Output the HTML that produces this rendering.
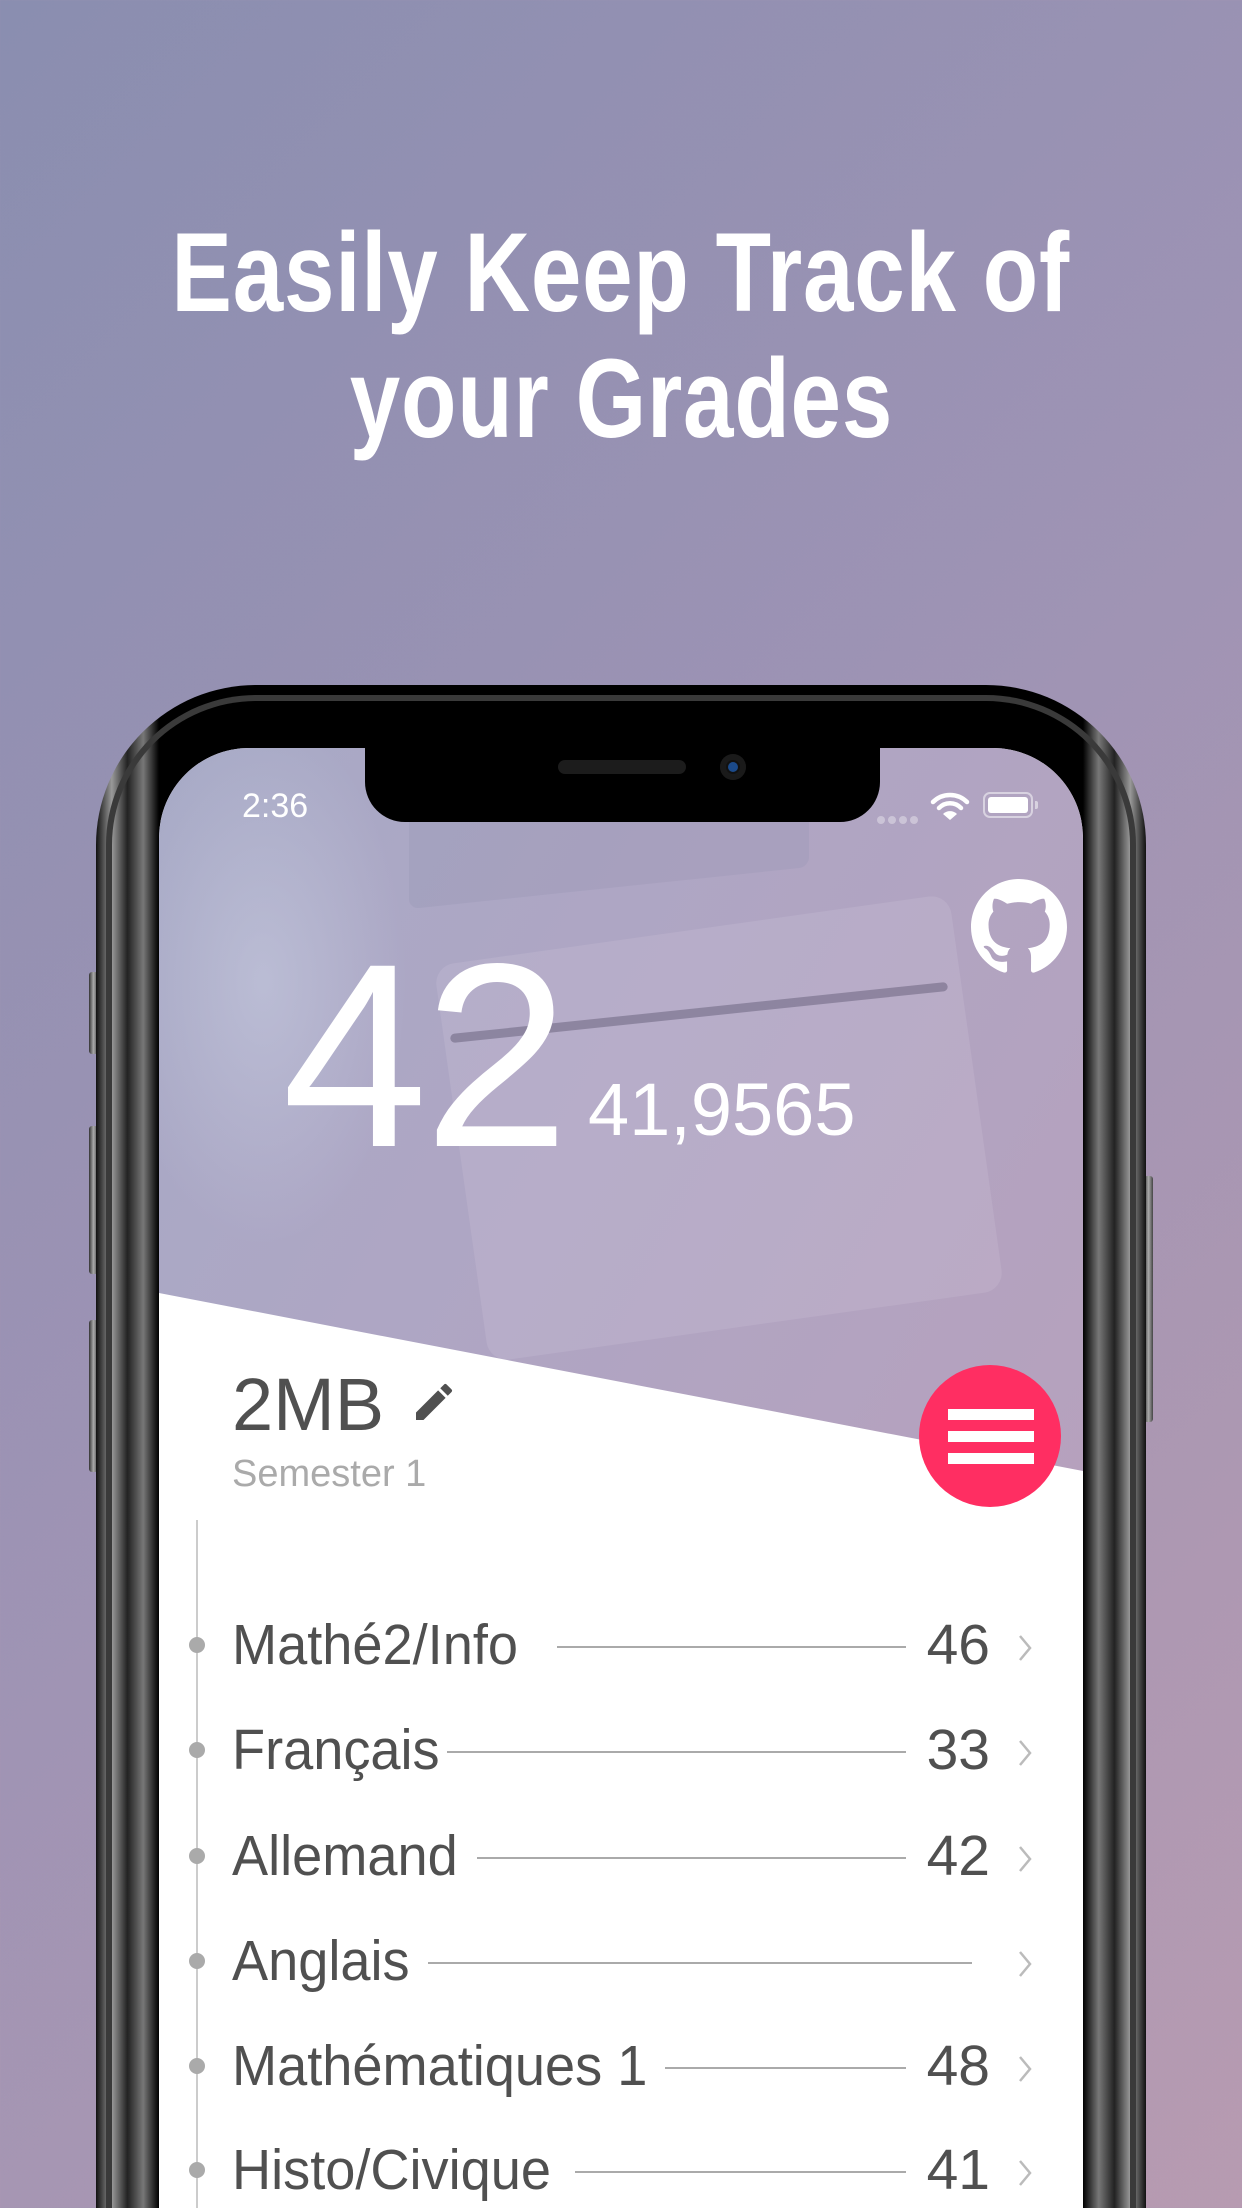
<!DOCTYPE html>
<html><head><meta charset="utf-8">
<style>
*{margin:0;padding:0;box-sizing:border-box}
html,body{width:1242px;height:2208px;overflow:hidden}
body{position:relative;background:linear-gradient(135deg,#8a8eb0 0%,#9d93b4 45%,#b79bb1 100%);font-family:"Liberation Sans",sans-serif}
.title{position:absolute;left:0;width:1242px;text-align:center;color:#fff;font-weight:bold;font-size:112px;line-height:126px;top:210px;letter-spacing:1px}
.title span{display:inline-block;transform:scaleX(0.81)}
.btn{position:absolute;background:linear-gradient(90deg,#333,#aaa,#444);border-radius:3px}
.phone{position:absolute;left:96px;top:685px;width:1050px;height:1523px;border-radius:160px 160px 0 0;background:linear-gradient(90deg,#111 0%,#999 1.5%,#222 3%,#777 4.5%,#000 6%,#000 94%,#777 95.5%,#222 97%,#999 98.5%,#111 100%);}
.phone:before{content:"";position:absolute;left:10px;top:10px;right:10px;bottom:0;border-radius:150px 150px 0 0;border:6px solid #3a3a3a;border-bottom:none}
.screen{position:absolute;left:159px;top:748px;width:924px;height:1460px;border-radius:90px 90px 0 0;overflow:hidden;background:#fff}
.hdr{position:absolute;left:0;top:0;width:924px;height:760px;background:linear-gradient(120deg,#a7aac6 0%,#aea6c4 40%,#b6a1bd 100%)}
.white{position:absolute;left:0;top:0;width:924px;height:900px;background:#fff;clip-path:polygon(0 545px,924px 723px,924px 900px,0 900px)}
.notch{position:absolute;left:365px;top:740px;width:515px;height:82px;background:#000;border-radius:0 0 40px 40px}
.num{position:absolute;color:#fff}
.row{position:absolute;left:232px;width:800px;height:60px;color:#505050;font-size:57px}
.row .t{position:absolute;left:0;top:0;display:inline-block;transform:scaleX(0.95);transform-origin:left}
.row .l{position:absolute;height:2px;background:#aaa;top:34px}
.row .n{position:absolute;right:42px;top:0}
.row .c{position:absolute;right:0;top:22px;width:14px;height:28px}
.dot{position:absolute;left:189px;width:16px;height:16px;border-radius:50%;background:#aaa}
</style></head><body>
<div class="title"><span>Easily Keep Track of</span><br><span>your Grades</span></div>

<div class="btn" style="left:89px;top:972px;width:9px;height:82px"></div>
<div class="btn" style="left:89px;top:1126px;width:9px;height:148px"></div>
<div class="btn" style="left:89px;top:1320px;width:9px;height:152px"></div>
<div class="btn" style="left:1144px;top:1176px;width:9px;height:246px"></div>
<div class="phone"></div>

<div class="screen">
 <div class="hdr">
  <div style="position:absolute;left:0;top:0;width:260px;height:520px;background:radial-gradient(ellipse at 40% 45%,rgba(200,205,225,.55),rgba(200,205,225,0) 65%)"></div>
  <div style="position:absolute;left:250px;top:-20px;width:400px;height:160px;background:rgba(140,140,170,.2);transform:skewY(-6deg);border-radius:10px"></div>
  <div style="position:absolute;left:300px;top:180px;width:520px;height:400px;background:rgba(215,205,225,.2);transform:rotate(-8deg);border-radius:20px"></div>
  <div style="position:absolute;left:290px;top:260px;width:500px;height:9px;background:rgba(90,85,110,.45);transform:rotate(-6deg);border-radius:5px"></div>
 </div>
 <div class="white"></div>
</div>
<div class="notch"><div style="position:absolute;left:193px;top:20px;width:128px;height:14px;border-radius:7px;background:#1c1c1c"></div><div style="position:absolute;left:355px;top:14px;width:26px;height:26px;border-radius:50%;background:#111;box-shadow:inset 0 0 0 6px #1a1a1a"><div style="position:absolute;left:8px;top:8px;width:10px;height:10px;border-radius:50%;background:#1b4a8a"></div></div></div>

<div class="num" style="left:242px;top:786px;font-size:34px;line-height:40px">2:36</div>
<div style="position:absolute;left:877px;top:811px">
 <span style="display:inline-block;width:8px;height:8px;border-radius:50%;background:rgba(255,255,255,.35);margin-right:3px"></span><span style="display:inline-block;width:8px;height:8px;border-radius:50%;background:rgba(255,255,255,.35);margin-right:3px"></span><span style="display:inline-block;width:8px;height:8px;border-radius:50%;background:rgba(255,255,255,.35);margin-right:3px"></span><span style="display:inline-block;width:8px;height:8px;border-radius:50%;background:rgba(255,255,255,.35)"></span>
</div>
<svg style="position:absolute;left:930px;top:792px" width="40" height="28" viewBox="0 0 40 28"><path d="M3 10 A24 24 0 0 1 37 10" stroke="#fff" stroke-width="4.5" fill="none" stroke-linecap="round"/><path d="M9 16 A15 15 0 0 1 31 16" stroke="#fff" stroke-width="4.5" fill="none" stroke-linecap="round"/><path d="M13 22 L20 28 L27 22 A10 10 0 0 0 13 22Z" fill="#fff"/></svg>
<div style="position:absolute;left:983px;top:792px;width:50px;height:26px;border:2px solid rgba(255,255,255,.5);border-radius:7px"><div style="position:absolute;left:3px;top:3px;right:3px;bottom:3px;background:#fff;border-radius:3px"></div></div>
<div style="position:absolute;left:1035px;top:801px;width:3px;height:8px;background:rgba(255,255,255,.5);border-radius:0 2px 2px 0"></div>

<svg style="position:absolute;left:971px;top:879px" width="96" height="96" viewBox="0 0 16 16"><path fill="#fff" d="M8 0C3.58 0 0 3.58 0 8c0 3.54 2.290 6.53 5.47 7.59.4.07.55-.17.55-.38 0-.19-.01-.82-.01-1.49-2.01.37-2.53-.49-2.69-.94-.09-.23-.48-.94-.82-1.13-.28-.15-.68-.52-.01-.53.63-.01 1.08.58 1.23.82.72 1.21 1.87.87 2.33.66.07-.52.28-.87.51-1.07-1.78-.2-3.64-.89-3.64-3.95 0-.87.31-1.59.82-2.150-.08-.2-.36-1.02.08-2.12 0 0 .67-.21 2.2.82.64-.18 1.32-.27 2-.27.68 0 1.36.09 2 .27 1.53-1.04 2.2-.82 2.2-.82.44 1.1.16 1.92.08 2.12.51.56.82 1.27.82 2.15 0 3.07-1.87 3.75-3.65 3.95.29.25.54.73.54 1.48 0 1.07-.01 1.93-.01 2.2 0 .21.15.46.55.38A8.013 8.013 0 0016 8c0-4.42-3.58-8-8-8z"/></svg>

<div class="num" style="left:282px;top:925px;font-size:262px;line-height:262px;letter-spacing:-4px">42</div>
<div class="num" style="left:588px;top:1070px;font-size:74px;line-height:80px">41,9565</div>

<div style="position:absolute;left:232px;top:1365px;font-size:74px;line-height:80px;color:#505050">2MB</div>
<svg style="position:absolute;left:410px;top:1378px" width="48" height="48" viewBox="0 0 24 24"><path fill="#505050" d="M3 17.25V21h3.75L17.81 9.94l-3.75-3.75L3 17.25zM20.71 7.04a1 1 0 000-1.41l-2.34-2.34a1 1 0 00-1.41 0l-1.83 1.83 3.75 3.75 1.830-1.83z"/></svg>
<div style="position:absolute;left:232px;top:1452px;font-size:38px;line-height:44px;color:#aaa">Semester 1</div>

<div style="position:absolute;left:919px;top:1365px;width:142px;height:142px;border-radius:50%;background:#ff2e62">
 <div style="position:absolute;left:29px;top:44px;width:86px;height:11px;background:#fff"></div>
 <div style="position:absolute;left:29px;top:66px;width:86px;height:11px;background:#fff"></div>
 <div style="position:absolute;left:29px;top:88px;width:86px;height:11px;background:#fff"></div>
</div>

<div style="position:absolute;left:196px;top:1520px;width:2px;height:700px;background:#ccc"></div>

<div class="dot" style="top:1637px"></div>
<div class="row" style="top:1612px"><span class="t">Mathé2/Info</span><div class="l" style="left:325px;right:126px"></div><span class="n">46</span><svg class="c" viewBox="0 0 14 28"><path d="M2 2 L12 14 L2 26" stroke="#bbb" stroke-width="2.5" fill="none"/></svg></div>
<div class="dot" style="top:1742px"></div>
<div class="row" style="top:1717px"><span class="t">Français</span><div class="l" style="left:215px;right:126px"></div><span class="n">33</span><svg class="c" viewBox="0 0 14 28"><path d="M2 2 L12 14 L2 26" stroke="#bbb" stroke-width="2.5" fill="none"/></svg></div>
<div class="dot" style="top:1848px"></div>
<div class="row" style="top:1823px"><span class="t">Allemand</span><div class="l" style="left:245px;right:126px"></div><span class="n">42</span><svg class="c" viewBox="0 0 14 28"><path d="M2 2 L12 14 L2 26" stroke="#bbb" stroke-width="2.5" fill="none"/></svg></div>
<div class="dot" style="top:1953px"></div>
<div class="row" style="top:1928px"><span class="t">Anglais</span><div class="l" style="left:196px;right:60px"></div><svg class="c" viewBox="0 0 14 28"><path d="M2 2 L12 14 L2 26" stroke="#bbb" stroke-width="2.5" fill="none"/></svg></div>
<div class="dot" style="top:2058px"></div>
<div class="row" style="top:2033px"><span class="t">Mathématiques 1</span><div class="l" style="left:433px;right:126px"></div><span class="n">48</span><svg class="c" viewBox="0 0 14 28"><path d="M2 2 L12 14 L2 26" stroke="#bbb" stroke-width="2.5" fill="none"/></svg></div>
<div class="dot" style="top:2162px"></div>
<div class="row" style="top:2137px"><span class="t">Histo/Civique</span><div class="l" style="left:343px;right:126px"></div><span class="n">41</span><svg class="c" viewBox="0 0 14 28"><path d="M2 2 L12 14 L2 26" stroke="#bbb" stroke-width="2.5" fill="none"/></svg></div>
</body></html>
